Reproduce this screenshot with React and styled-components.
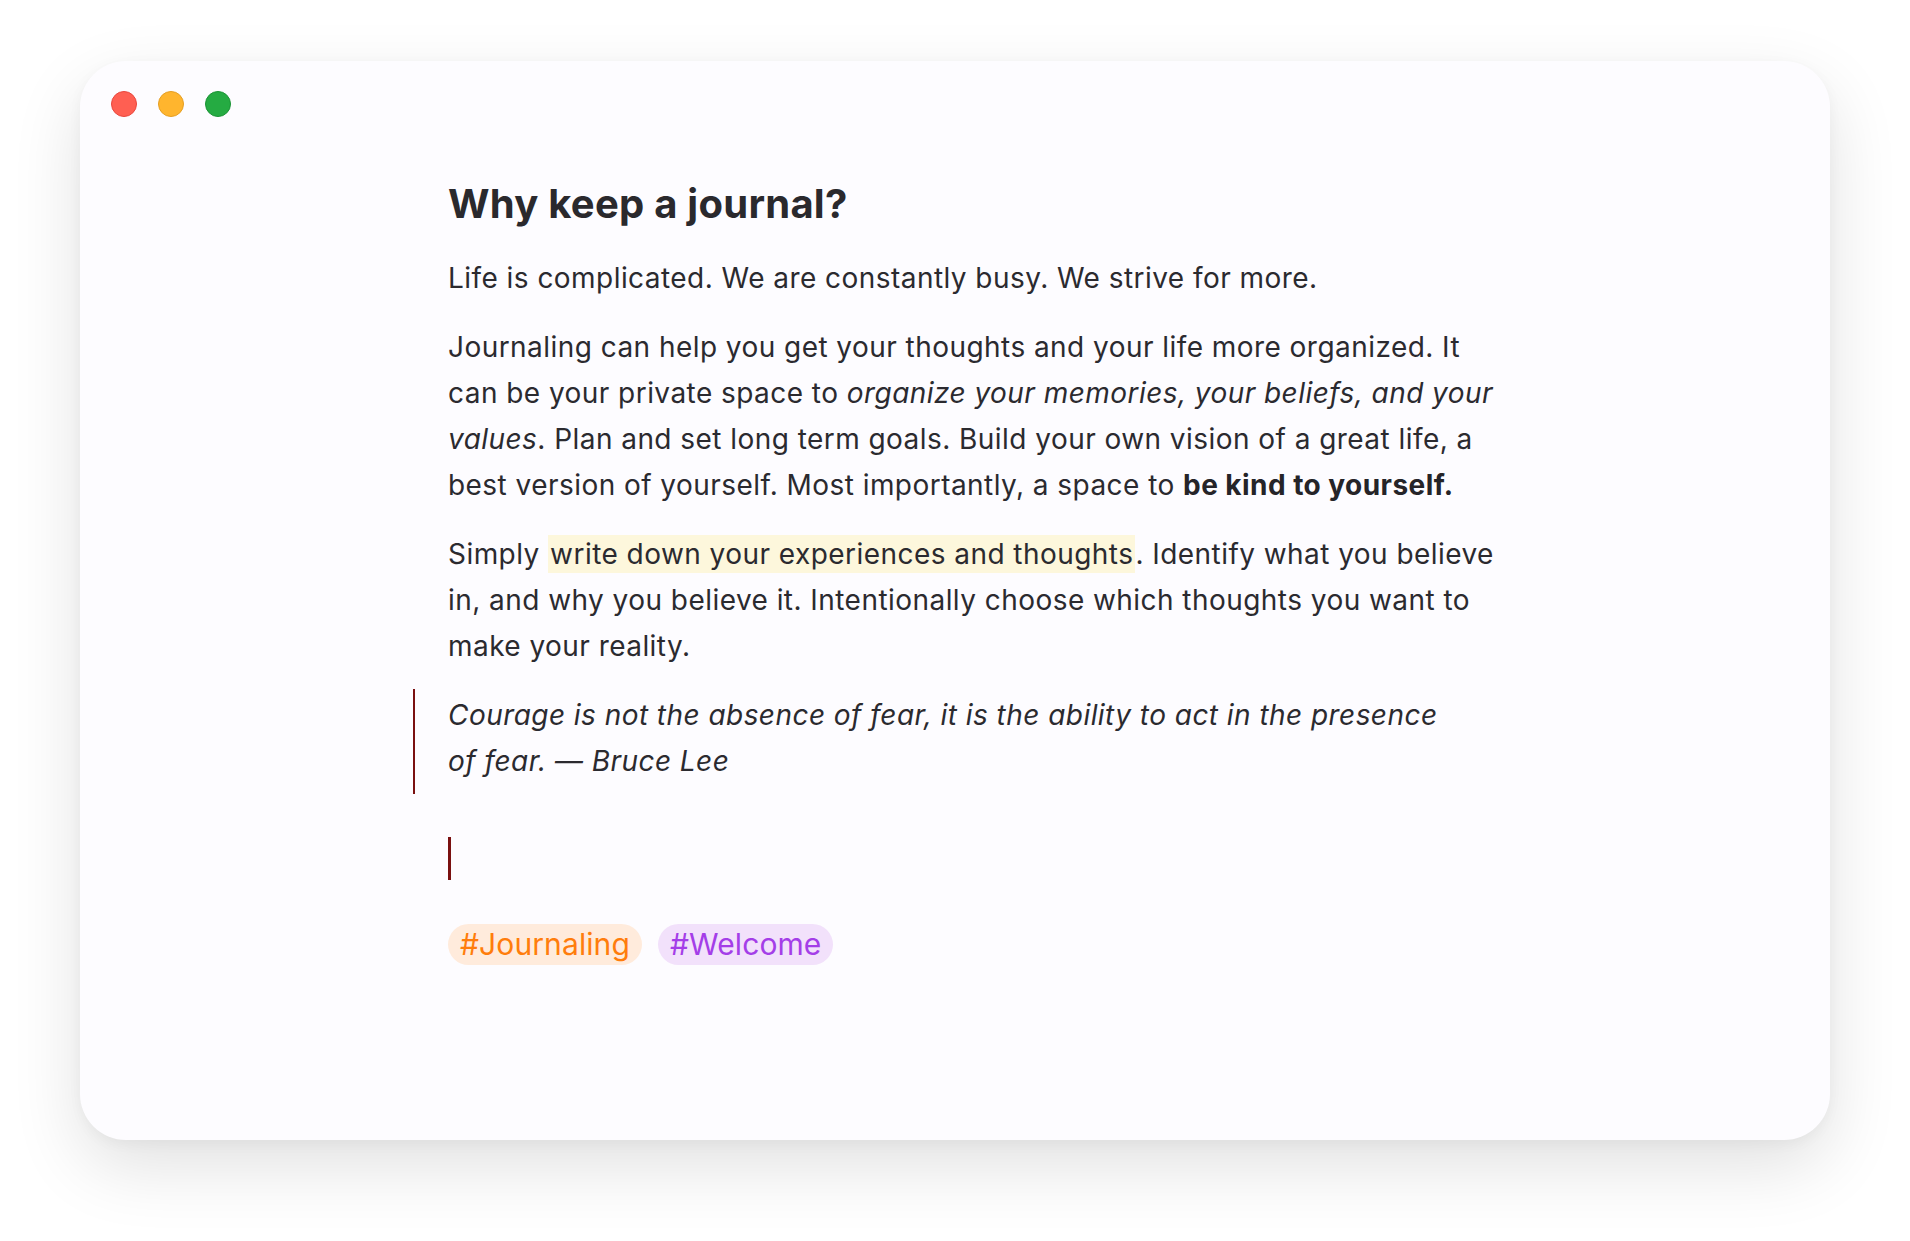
import React from "react";
import styled, { createGlobalStyle } from "styled-components";

const Global = createGlobalStyle`
  html, body { margin: 0; padding: 0; background: #ffffff; }
  body { font-family: Inter, "Noto Sans", sans-serif; -webkit-font-smoothing: antialiased; }
  * { box-sizing: border-box; }
`;

const Page = styled.div`
  width: 1910px;
  height: 1241px;
  padding: 61px 80px 101px 80px;
  background: #ffffff;
`;

const Window = styled.div`
  width: 1750px;
  height: 1079px;
  background: #fdfcff;
  border-radius: 46px;
  box-shadow: 0 26px 70px rgba(0, 0, 0, 0.12), 0 4px 14px rgba(0, 0, 0, 0.04);
  display: flex;
  flex-direction: column;
  overflow: hidden;
`;

const TitleBar = styled.div`
  display: flex;
  align-items: center;
  gap: 21px;
  padding: 30px 0 0 31px;
  height: 56px;
`;

const Light = styled.span`
  width: 26px;
  height: 26px;
  border-radius: 50%;
  background: ${(p) => p.$bg};
  border: 1.5px solid ${(p) => p.$border};
`;

const Content = styled.div`
  margin-left: 368px;
  width: 1058px;
  color: #2b2a2f;
`;

const Title = styled.h1`
  margin: 62px 0 0 0;
  font-size: 40px;
  line-height: 50px;
  font-weight: 700;
  letter-spacing: 0.25px;
  color: #2a292d;
`;

const Para = styled.p`
  margin: ${(p) => p.$top || 23}px 0 0 0;
  font-size: 28px;
  line-height: 46px;
  font-weight: 400;
  letter-spacing: 0.45px;
`;

const Em = styled.em`
  font-style: italic;
`;

const Strong = styled.strong`
  font-weight: 700;
  color: #252428;
`;

const Mark = styled.mark`
  background: #fdf7dc;
  color: inherit;
  padding: 2px 2px;
`;

const Quote = styled.blockquote`
  margin: 19.5px 0 0 -35px;
  padding: 3.5px 55px 9.5px 33px;
  border-left: 2.5px solid #7a1010;
  font-size: 28px;
  line-height: 46px;
  font-style: italic;
  letter-spacing: 0.45px;
`;

const CursorLine = styled.div`
  margin-top: 43px;
  height: 43px;
  display: flex;
`;

const Caret = styled.span`
  width: 2.5px;
  height: 43px;
  background: #7a1010;
`;

const Tags = styled.div`
  display: flex;
  gap: 16px;
  margin-top: 44px;
`;

const Tag = styled.span`
  height: 41px;
  padding: 0 12px;
  border-radius: 21px;
  display: inline-flex;
  align-items: center;
  font-size: 30px;
  font-weight: 400;
  letter-spacing: 0.1px;
  background: ${(p) => p.$bg};
  color: ${(p) => p.$fg};
`;

export default function App() {
  return (
    <>
      <Global />
      <Page>
        <Window>
          <TitleBar>
            <Light $bg="#ff5f52" $border="#e8463c" />
            <Light $bg="#ffb52e" $border="#e59e22" />
            <Light $bg="#25ab42" $border="#1a9334" />
          </TitleBar>
          <Content>
            <Title>Why keep a journal?</Title>
            <Para $top={26}>Life is complicated. We are constantly busy. We strive for more.</Para>
            <Para>
              Journaling can help you get your thoughts and your life more organized. It can be your
              private space to <Em>organize your memories, your beliefs, and your values</Em>. Plan and
              set long term goals. Build your own vision of a great life, a best version of yourself.
              Most importantly, a space to <Strong>be kind to yourself.</Strong>
            </Para>
            <Para>
              Simply <Mark>write down your experiences and thoughts</Mark>. Identify what you believe
              in, and why you believe it. Intentionally choose which thoughts you want to make your
              reality.
            </Para>
            <Quote>
              Courage is not the absence of fear, it is the ability to act in the presence of fear. —
              Bruce Lee
            </Quote>
            <CursorLine>
              <Caret />
            </CursorLine>
            <Tags>
              <Tag $bg="#ffebdc" $fg="#ff7d0c">#Journaling</Tag>
              <Tag $bg="#f2e1fb" $fg="#a43ee8">#Welcome</Tag>
            </Tags>
          </Content>
        </Window>
      </Page>
    </>
  );
}
